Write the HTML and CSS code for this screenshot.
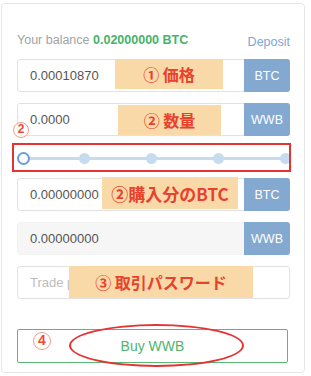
FILE: index.html
```html
<!DOCTYPE html>
<html lang="ja">
<head>
    <meta charset="UTF-8">
    <meta name="viewport" content="width=device-width, initial-scale=1.0">
    <title>Buy WWB</title>
    <link rel="stylesheet" href="styles.css">
</head>
<body>
<div class="trade-card">
    <div class="balance-row">
        <div class="balance">Your balance <b>0.02000000 BTC</b></div>
        <a class="deposit" href="#">Deposit</a>
    </div>

    <div class="field">
        <input class="field-input" type="text" value="0.00010870">
        <span class="addon">BTC</span>
        <div class="note note-price">① 価格</div>
    </div>

    <div class="field">
        <input class="field-input" type="text" value="0.0000">
        <span class="addon">WWB</span>
        <div class="note note-amount">② 数量</div>
        <span class="mark mark-slider">2</span>
    </div>

    <div class="slider-box">
        <div class="slider">
            <div class="track"></div>
            <span class="dot dot-handle"></span>
            <span class="dot" style="left: 25%"></span>
            <span class="dot" style="left: 50%"></span>
            <span class="dot" style="left: 75%"></span>
            <span class="dot" style="left: 100%"></span>
        </div>
    </div>

    <div class="field">
        <input class="field-input" type="text" value="0.00000000">
        <span class="addon">BTC</span>
        <div class="note note-total">②購入分のBTC</div>
    </div>

    <div class="field field-disabled">
        <input class="field-input" type="text" value="0.00000000" disabled>
        <span class="addon">WWB</span>
    </div>

    <div class="field">
        <input class="field-input" type="password" placeholder="Trade password">
        <div class="note note-pass">③ 取引パスワード</div>
    </div>

    <button class="buy-button">
        Buy WWB
        <span class="mark mark-buy">4</span>
        <span class="ring"></span>
    </button>
</div>
</body>
</html>
```

FILE: styles.css
```css
body {
    margin: 0;
    padding: 0;
    background: #fff;
    font-family: "Liberation Sans", Arial, "Noto Sans CJK JP", sans-serif;
}
.trade-card {
    box-sizing: border-box;
    width: 304px;
    margin: 3px 0 0 1px;
    padding: 26px 14px 9px 15px;
    border: 1px solid #e6e6e6;
    border-radius: 4px;
}
.balance-row {
    display: flex;
    justify-content: space-between;
    align-items: flex-end;
    height: 20px;
    margin-bottom: 9px;
}
.balance {
    font-size: 12.5px;
    color: #a3a3a3;
    line-height: 20px;
}
.balance b {
    color: #45b36b;
}
.deposit {
    font-size: 12.5px;
    color: #7fa6d3;
    text-decoration: none;
    line-height: 16px;
}
.field {
    position: relative;
    display: flex;
    height: 33px;
    margin-bottom: 11px;
    border: 1px solid #e2e2e2;
    border-radius: 3px;
    box-sizing: border-box;
}
.field-input {
    flex: 1;
    min-width: 0;
    border: none;
    outline: none;
    background: transparent;
    padding: 0 0 0 12px;
    font-family: inherit;
    font-size: 13px;
    color: #555;
}
.field-input::placeholder {
    color: #bdbdbd;
}
.field-disabled {
    background: #f6f6f6;
    border-color: #f3f3f3;
}
.addon {
    width: 46px;
    margin: -1px -1px -1px 0;
    display: flex;
    align-items: center;
    justify-content: center;
    background: #84a9d1;
    color: #fff;
    font-size: 12.5px;
    border-radius: 0 3px 3px 0;
}

/* annotation labels on top of the form */
.note {
    position: absolute;
    top: 0;
    display: flex;
    align-items: center;
    justify-content: center;
    background: #f9d9a8;
    color: #e8412c;
    font-family: "Noto Sans CJK JP", sans-serif;
    font-weight: bold;
    font-size: 16px;
}
.note-price { left: 97px; width: 108px; height: 30px; top: -1px; }
.note-amount { left: 100px; width: 103px; height: 30px; top: 1px; }
.note-total { left: 84px; width: 136px; height: 32px; top: -2px; font-size: 17px; }
.note-pass { left: 51px; width: 184px; height: 32px; top: -1px; }
.mark {
    position: absolute;
    box-sizing: border-box;
    width: 16px;
    height: 16px;
    border: 1.5px solid #f29b88;
    border-radius: 50%;
    color: #ec4a33;
    font-weight: bold;
    font-size: 12px;
    line-height: 13px;
    text-align: center;
    background: rgba(255, 255, 255, 0.6);
}
.mark-slider { left: -5px; top: 18px; }
.mark-buy { left: 15px; top: 2px; width: 18px; height: 18px; line-height: 15px; font-size: 14px; }

.slider-box {
    height: 29px;
    margin: -4px -1px 6px -5px;
    border: 2px solid #e53232;
    box-sizing: border-box;
    overflow: hidden;
}
.slider {
    position: relative;
    height: 100%;
    margin: 0 4px 0 3px;
}
.track {
    position: absolute;
    left: 0;
    right: -6px;
    top: 12px;
    height: 3px;
    background: #c7dbef;
}
.dot {
    position: absolute;
    top: 8px;
    width: 11px;
    height: 11px;
    margin-left: -5px;
    border-radius: 50%;
    background: #c7dbef;
}
.dot-handle {
    left: 0;
    top: 7px;
    margin-left: 0;
    box-sizing: border-box;
    width: 13px;
    height: 13px;
    background: #fff;
    border: 2px solid #6f9dd0;
    z-index: 1;
}

.buy-button {
    position: relative;
    display: block;
    width: 271px;
    height: 34px;
    margin-top: 30px;
    padding: 0;
    border: 1px solid #58b874;
    border-radius: 2px;
    background: #fff;
    color: #4fb46e;
    font-family: inherit;
    font-size: 14px;
}
.ring {
    position: absolute;
    left: 51px;
    top: -6px;
    width: 175px;
    height: 43px;
    box-sizing: border-box;
    border: 2.5px solid #e53232;
    border-radius: 50%;
}
```
